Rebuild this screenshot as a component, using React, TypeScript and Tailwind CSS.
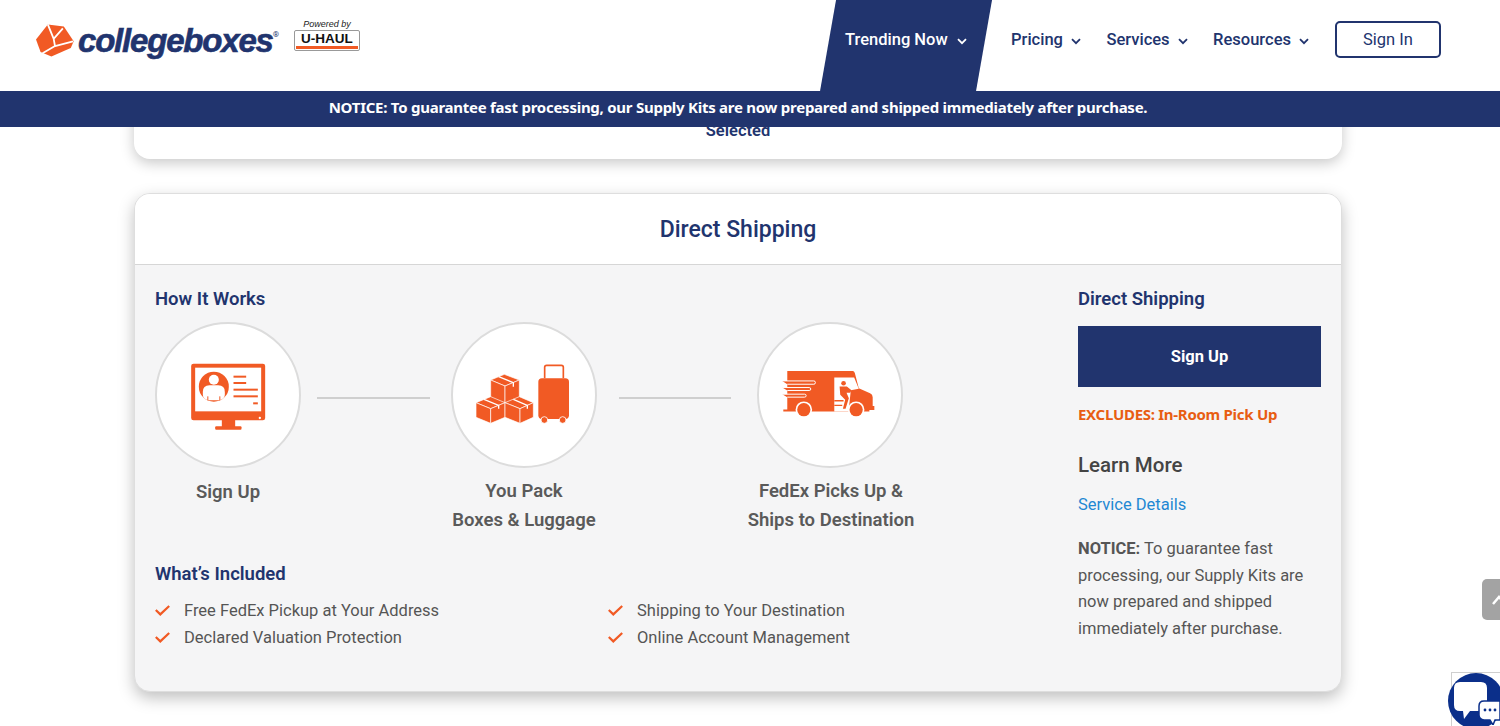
import React from "react";

const OR = "#f15a24";

function Chevron({ className = "" }: { className?: string }) {
  return (
    <svg width="10" height="7" viewBox="0 0 10 7" className={className} fill="none" stroke="currentColor" strokeWidth="1.8">
      <path d="M1 1.2 5 5.2 9 1.2" />
    </svg>
  );
}

function Check() {
  return (
    <svg width="15" height="11" viewBox="0 0 15 11" fill="none" stroke={OR} strokeWidth="2.2" className="shrink-0">
      <path d="M0.8 5 5.3 9.4 14.2 1" />
    </svg>
  );
}

function LogoBox() {
  return (
    <svg width="38" height="33" viewBox="18 33 116 100" className="shrink-0">
      <polygon points="54,34 103,40 133,85 124,106 65,132 32,118 18,80" fill={OR} />
      <path d="M54 34 72 78 100 46M72 78 76 100 131 86M76 100 38 122" stroke="#fff" strokeWidth="5.5" fill="none" />
    </svg>
  );
}

function MonitorIcon() {
  return (
    <svg width="77" height="70" viewBox="150 155 230 210" className="mt-[3px]">
      <rect x="153" y="160" width="222" height="170" rx="7" fill={OR} />
      <rect x="165" y="172" width="198" height="131" fill="#fff" />
      <rect x="245" y="328" width="40" height="22" fill={OR} />
      <rect x="225" y="348" width="79" height="10" rx="3" fill={OR} />
      <circle cx="359" cy="323" r="3.5" fill="#fff" />
      <circle cx="221" cy="229" r="45" fill={OR} />
      <circle cx="221" cy="208" r="15" fill="#fff" />
      <path d="M188 245q0-20 20-20h26q20 0 20 20v8q0 14-20 17h-26q-20-3-20-17z" fill="#fff" />
      <path d="M203 258v12M239 258v12" stroke={OR} strokeWidth="3" />
      <g fill={OR}>
        <rect x="280" y="196" width="38" height="6" />
        <rect x="280" y="215" width="38" height="6" />
        <rect x="280" y="235" width="73" height="6" />
        <rect x="280" y="255" width="73" height="6" />
        <rect x="339" y="276" width="14" height="6" />
      </g>
    </svg>
  );
}

function PackIcon() {
  return (
    <svg width="95" height="62" viewBox="15 12 285 186" className="mr-[3px]">
      <g fill={OR} stroke="#fff" strokeWidth="2" strokeLinejoin="round">
        <polygon points="62,60 103,43 148,60 105,78" />
        <polygon points="62,60 105,78 105,142 62,125" />
        <polygon points="105,78 148,60 148,125 105,142" />
        <polygon points="18,128 62,110 105,128 62,146" />
        <polygon points="18,128 62,146 62,190 18,172" />
        <polygon points="62,146 105,128 105,172 62,190" />
        <polygon points="105,128 148,110 190,128 150,146" />
        <polygon points="105,128 150,146 150,190 105,172" />
        <polygon points="150,146 190,128 190,172 150,190" />
      </g>
      <path d="M86 50 130 68V80M42 118 86 136V146M130 118 172 136V146" stroke="#fff" strokeWidth="4" fill="none" />
      <rect x="205" y="55" width="92" height="122" rx="11" fill={OR} />
      <path d="M224 55V22q0-6 6-6h44q6 0 6 6v33" fill="none" stroke={OR} strokeWidth="5" />
      <circle cx="223" cy="180" r="10" fill={OR} stroke="#fff" strokeWidth="2.5" />
      <circle cx="278" cy="180" r="10" fill={OR} stroke="#fff" strokeWidth="2.5" />
    </svg>
  );
}

function TruckIcon() {
  return (
    <svg width="94" height="48" viewBox="12 15 282 145" className="mb-[2px] mr-[4px]">
      <path d="M30 18H228q4 0 6 6l12 46 34 15q8 3 8 12v27h5v12h-15v4H18v-6H30z" fill={OR} />
      <path d="M15 48H110q5 0 5 5t-5 5H30M15 68H96q5 0 5 4.5t-5 4.5H30M15 88H82q5 0 5 4.5t-5 4.5H30" fill={OR} stroke="#fff" strokeWidth="3" />
      <path d="M172 38H232L246 72 222 76 215 140H172z" fill="#fff" />
      <circle cx="200" cy="55" r="7" fill={OR} />
      <path d="M188 65H210L224 76 220 84H209L216 100 206 132H198L205 105 190 90z" fill={OR} />
      <path d="M172 108H200M172 122H196" stroke={OR} strokeWidth="4" />
      <circle cx="80" cy="135" r="25" fill="#fff" />
      <circle cx="80" cy="135" r="20" fill={OR} />
      <circle cx="238" cy="135" r="25" fill="#fff" />
      <circle cx="238" cy="135" r="20" fill={OR} />
    </svg>
  );
}

function Step({ icon, lines, top }: { icon: React.ReactNode; lines: string[]; top: string }) {
  return (
    <div className="flex w-[146px] shrink-0 flex-col items-center">
      <div className="flex h-[146px] w-[146px] items-center justify-center rounded-full border-2 border-[#dcdcdc] bg-white">
        {icon}
      </div>
      <div className={`whitespace-nowrap text-center text-[18.5px] font-semibold leading-[29px] text-[#5a5a5a] ${top}`}>
        {lines.map((l) => (
          <div key={l}>{l}</div>
        ))}
      </div>
    </div>
  );
}

function Connector({ className }: { className: string }) {
  return <div className={`mt-[75px] h-[2px] shrink-0 bg-[#cfcfcf] ${className}`} />;
}

function NavItem({ label }: { label: string }) {
  return (
    <a className="flex items-center gap-[8px] text-[16.5px] font-medium text-[#21346e]">
      {label}
      <Chevron className="mt-[3px]" />
    </a>
  );
}

export default function App() {
  return (
    <div className="relative h-[726px] w-full overflow-hidden bg-white font-['Roboto',sans-serif]">
      <header className="relative z-20 flex h-[91px] items-center justify-between bg-white pl-[36px] pr-[59px]">
        <div className="mb-[10px] flex items-center">
          <LogoBox />
          <span className="ml-[4px] font-['Liberation_Sans',sans-serif] text-[33px] font-bold italic leading-none tracking-[-1.2px] text-[#21346e] [-webkit-text-stroke:0.6px_#21346e]">
            collegeboxes
          </span>
          <span className="mb-[12px] text-[8px] text-[#21346e]">®</span>
          <div className="mb-[12px] ml-[15px] flex w-[66px] flex-col items-center">
            <span className="font-['Liberation_Sans',sans-serif] text-[9px] italic leading-[11px] text-[#222]">Powered by</span>
            <div className="flex h-[21px] w-[66px] flex-col items-center justify-between overflow-hidden rounded-[2px] border border-[#999] bg-white">
              <span className="font-['Liberation_Sans',sans-serif] text-[13.5px] font-bold leading-[15px] text-[#111]">U-HAUL</span>
              <span className="mb-[1px] h-[4px] w-[62px] bg-[#f15a24]" />
            </div>
          </div>
        </div>
        <nav className="flex h-full items-center">
          <a className="flex h-full w-[172px] items-center gap-[9px] bg-[#21346e] pb-[11px] pl-[25px] text-[16.5px] font-medium text-white [clip-path:polygon(16px_0,100%_0,156px_100%,0_100%)]">
            Trending Now
            <Chevron className="mt-[3px]" />
          </a>
          <div className="mb-[11px] ml-[19px] flex items-center gap-[25.5px]">
            <NavItem label="Pricing" />
            <NavItem label="Services" />
            <NavItem label="Resources" />
          </div>
          <a className="mb-[12px] ml-[26px] flex h-[37px] w-[106px] items-center justify-center rounded-[5px] border-2 border-[#21346e] pt-[1px] text-[16.5px] text-[#21346e]">
            Sign In
          </a>
        </nav>
      </header>

      <div className="relative z-20 flex h-[36px] items-center justify-center bg-[#21346e] pb-[3px] pr-[24px] font-['Noto_Sans',sans-serif] text-[15px] font-bold tracking-[-0.26px] text-white">
        NOTICE: To guarantee fast processing, our Supply Kits are now prepared and shipped immediately after purchase.
      </div>

      <main className="mx-[134px] w-[1208px]">
        <div className="-mt-[20px] flex h-[52px] items-start justify-center rounded-b-[16px] bg-white pt-[14px] text-[16.5px] font-semibold leading-[20px] text-[#21346e] shadow-[0_4px_14px_rgba(0,0,0,0.22)]">
          Selected
        </div>

        <section className="mt-[34px] h-[499px] overflow-hidden rounded-[16px] border border-[#dedede] bg-[#f5f5f6] shadow-[0_6px_16px_rgba(0,0,0,0.25)]">
          <div className="flex h-[71px] items-center justify-center border-b border-[#d6d6d6] bg-white pt-[2px] text-[23px] font-medium text-[#21346e]">
            Direct Shipping
          </div>
          <div className="flex pl-[20px] pr-[20px]">
            <div className="w-[923px] shrink-0">
              <h3 className="mt-[22px] text-[18.5px] font-semibold leading-[24px] text-[#21346e]">How It Works</h3>
              <div className="mt-[11px] flex items-start">
                <Step icon={<MonitorIcon />} lines={["Sign Up"]} top="mt-[10px]" />
                <Connector className="ml-[16px] w-[113px]" />
                <div className="ml-[21px]">
                  <Step icon={<PackIcon />} lines={["You Pack", "Boxes & Luggage"]} top="mt-[9px]" />
                </div>
                <Connector className="ml-[22px] w-[112px]" />
                <div className="ml-[26px]">
                  <Step icon={<TruckIcon />} lines={["FedEx Picks Up &", "Ships to Destination"]} top="mt-[9px] ml-[2px]" />
                </div>
              </div>
              <h3 className="mt-[27px] text-[18.5px] font-semibold leading-[24px] text-[#21346e]">What’s Included</h3>
              <div className="mt-[11px] grid grid-cols-[453px_1fr] text-[16.5px] leading-[27px] text-[#555]">
                {["Free FedEx Pickup at Your Address", "Shipping to Your Destination", "Declared Valuation Protection", "Online Account Management"].map((t) => (
                  <div key={t} className="flex items-center gap-[14px]">
                    <Check />
                    {t}
                  </div>
                ))}
              </div>
            </div>
            <aside className="w-[243px] shrink-0">
              <h3 className="mt-[22px] text-[18.5px] font-semibold leading-[24px] text-[#21346e]">Direct Shipping</h3>
              <div className="mt-[15px] flex h-[61px] items-center justify-center bg-[#21346e] pt-[2px] text-[16.5px] font-bold text-white">Sign Up</div>
              <p className="mt-[16px] font-['Noto_Sans',sans-serif] text-[15px] font-bold leading-[22px] tracking-[-0.28px] text-[#e85d12]">EXCLUDES: In-Room Pick Up</p>
              <h4 className="mt-[26px] text-[20.5px] font-medium leading-[28px] text-[#444]">Learn More</h4>
              <a className="mt-[13px] block text-[16.5px] leading-[26px] text-[#1f88d3]">Service Details</a>
              <p className="mt-[18px] text-[16.5px] leading-[26.6px] text-[#555]">
                <b className="font-bold">NOTICE:</b> To guarantee fast processing, our Supply Kits are now prepared and shipped immediately after purchase.
              </p>
            </aside>
          </div>
        </section>
      </main>

      <div className="absolute left-[1482px] top-[579px] flex h-[41px] w-[30px] items-center rounded-l-[5px] bg-[#a3a3a3] pl-[10px]">
        <svg width="14" height="10" viewBox="0 0 14 10" fill="none" stroke="#fff" strokeWidth="2.5"><path d="M1 9 7 2l6 7" /></svg>
      </div>
      <div className="absolute left-[1451px] top-[672px] h-[54px] w-[49px] border-l border-t border-[#cfcfcf] bg-white" />
      <div className="absolute left-[1448px] top-[673px] h-[56px] w-[56px] rounded-full bg-[#0b2f8a]">
        <svg width="52" height="46" viewBox="0 0 52 46" className="mt-[6px]">
          <path d="M12 3h21q6 0 6 6v17q0 6-6 6H22l-6 8-1-8h-3q-6 0-6-6V9q0-6 6-6z" fill="#fff" />
          <path d="M36 22h16v19H47l-2 5-3-5h-6q-5-1-5-5v-9q0-5 5-5z" fill="#fff" stroke="#0b2f8a" strokeWidth="1.5" />
          <g fill="#0b2f8a"><circle cx="37" cy="31" r="1.4" /><circle cx="42" cy="31" r="1.4" /><circle cx="47" cy="31" r="1.4" /></g>
        </svg>
      </div>
    </div>
  );
}
